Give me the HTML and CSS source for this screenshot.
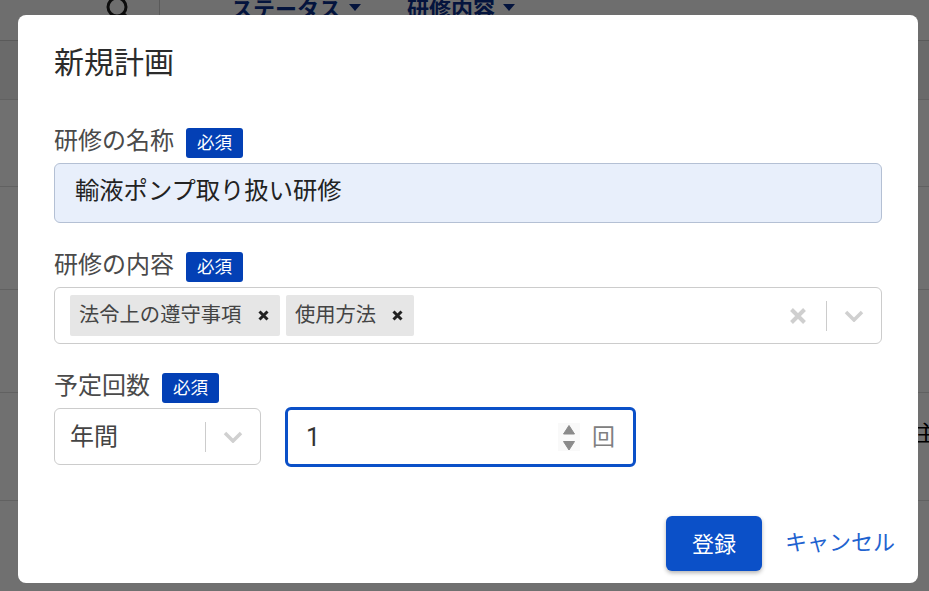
FILE: index.html
```html
<!DOCTYPE html>
<html lang="ja">
<head>
<meta charset="utf-8">
<title>新規計画</title>
<link rel="stylesheet" href="styles.css">
</head>
<body>
<div class="page">
  <header class="page-head">
    <svg class="search" width="26" height="26" viewBox="0 0 26 26"><circle cx="12" cy="11" r="9" fill="none" stroke="#1c1c1c" stroke-width="3"/><path d="M18 17l6 6" stroke="#1c1c1c" stroke-width="3"/></svg>
    <div class="head-rule"></div>
    <div class="filter filter-first">ステータス<span class="caret"></span></div>
    <div class="filter">研修内容<span class="caret"></span></div>
  </header>
  <div class="band"></div>
  <div class="row row-a"></div>
  <div class="row row-b"></div>
  <div class="row row-c"></div>
  <div class="row row-d"><span class="cut">主</span></div>
</div>
<div class="overlay">
  <section class="dialog">
    <h1 class="title">新規計画</h1>
    <div class="label-row first"><span class="label">研修の名称</span><span class="req">必須</span></div>
    <div class="name-input">輸液ポンプ取り扱い研修</div>
    <div class="label-row second"><span class="label">研修の内容</span><span class="req">必須</span></div>
    <div class="multi">
      <div class="tags">
        <span class="tag"><span class="tag-text">法令上の遵守事項</span><svg class="tag-x" width="13" height="13" viewBox="0 0 13 13"><path d="M2.500 2.500l8 8M10.500 2.500l-8 8" stroke="#222" stroke-width="3"/></svg></span>
        <span class="tag tag-short"><span class="tag-text">使用方法</span><svg class="tag-x" width="13" height="13" viewBox="0 0 13 13"><path d="M2.500 2.500l8 8M10.500 2.500l-8 8" stroke="#222" stroke-width="3"/></svg></span>
      </div>
      <svg class="clear" width="18" height="18" viewBox="0 0 18 18"><path d="M2.500 2.500l13 13M15.500 2.500l-13 13" stroke="#cfcfcf" stroke-width="4"/></svg>
      <span class="sep"></span>
      <svg class="chev" width="20" height="12" viewBox="0 0 20 12"><path d="M2 2l8 8 8-8" fill="none" stroke="#d0d0d0" stroke-width="3.500"/></svg>
    </div>
    <div class="label-row third"><span class="label">予定回数</span><span class="req">必須</span></div>
    <div class="count-row">
      <div class="period">
        <span class="period-text">年間</span>
        <span class="sep"></span>
        <svg class="chev" width="20" height="12" viewBox="0 0 20 12"><path d="M2 2l8 8 8-8" fill="none" stroke="#d0d0d0" stroke-width="3.500"/></svg>
      </div>
      <div class="count">
        <span class="count-value">1</span>
        <span class="spin"><svg width="22" height="28" viewBox="0 0 22 28"><rect width="22" height="28" fill="#f9f9f9"/><path d="M11 2.500l5.500 8.500H5.500zM11 27l5.500-8.500H5.500z" fill="#8a8a8a" stroke="#8a8a8a" stroke-linejoin="round"/></svg></span>
        <span class="unit">回</span>
      </div>
    </div>
    <footer class="actions">
      <button class="primary">登録</button>
      <a class="cancel">キャンセル</a>
    </footer>
  </section>
</div>
</body>
</html>
```
FILE: styles.css
```css
* { box-sizing: border-box; }
html, body { margin: 0; height: 100%; }
body {
  width: 929px;
  height: 591px;
  overflow: hidden;
  position: relative;
  background: #fff;
  font-family: "Noto Sans CJK JP", "Noto Sans", sans-serif;
  color: #333;
}
.page { height: 591px; overflow: hidden; }
.page-head {
  height: 41px;
  display: flex;
  align-items: flex-start;
  padding-left: 105px;
  background: #fafafa;
  border-bottom: 1px solid #ccc;
}
.search { margin-top: -4px; }
.head-rule { width: 1px; height: 40px; background: #ccc; margin-left: 28px; }
.filter {
  margin-top: -9px;
  margin-left: 46px;
  font-size: 22px;
  font-weight: 700;
  line-height: 32px;
  color: #0a2f8c;
  display: flex;
  align-items: center;
  white-space: nowrap;
}
.filter-first { margin-left: 71px; }
.caret {
  margin-left: 8px;
  border: 6px solid transparent;
  border-top: 7px solid #0a2f8c;
  border-bottom: 0;
}
.band { height: 59px; background: #f1f1f1; border-bottom: 1px solid #ddd; }
.row { border-bottom: 1px solid #ddd; background: #fff; }
.row-a { height: 87px; }
.row-b { height: 103px; }
.row-c { height: 103px; }
.row-d { height: 108px; padding-left: 915px; font-size: 22px; line-height: 76px; color: #000; white-space: nowrap; }
.overlay {
  position: absolute;
  inset: 0;
  background: rgba(0, 0, 0, 0.56);
  padding: 15px 11px 8px 18px;
}
.dialog {
  height: 568px;
  background: #fff;
  border-radius: 8px;
  padding: 24px 36px 0;
  display: flex;
  flex-direction: column;
}
.title {
  margin: 0;
  font-size: 30px;
  font-weight: 400;
  line-height: 42px;
  color: #2b2b2b;
}
.label-row { display: flex; align-items: center; height: 32px; }
.label-row.first { margin-top: 46px; }
.label-row.second { margin-top: 28px; }
.label-row.third { margin-top: 28px; }
.label { font-size: 24px; line-height: 28px; padding-bottom: 8px; color: #4a4a4a; }
.req {
  margin-left: 12px;
  width: 57px;
  height: 30px;
  background: #0340b5;
  border-radius: 3px;
  color: #fff;
  font-size: 17.500px;
  line-height: 28px;
  text-align: center;
}
.name-input {
  margin-top: 4px;
  height: 60px;
  border: 1px solid #b4c0d4;
  border-radius: 6px;
  background: #e8effb;
  padding-left: 20px;
  font-size: 24.300px;
  line-height: 50px;
  color: #222;
}
.multi {
  margin-top: 4px;
  height: 57px;
  border: 1px solid #ccc;
  border-radius: 6px;
  display: flex;
  align-items: center;
  padding: 0 17px 0 15px;
}
.tags { display: flex; gap: 6px; flex: 1; margin-top: -1px; }
.tag {
  height: 41px;
  width: 210px;
  padding-left: 9px;
  background: #e6e6e6;
  border-radius: 2px;
  font-size: 20.300px;
  color: #444;
  display: flex;
  align-items: center;
  justify-content: space-between;
  padding-right: 10px;
}
.tag-text { padding-bottom: 4px; }
.tag-short { width: 128px; }
.clear { margin-right: 19px; }
.sep { width: 1px; height: 30px; background: #ccc; }
.chev { margin-left: 17px; }
.count-row { display: flex; gap: 24px; margin-top: 4px; }
.period {
  width: 207px;
  height: 57px;
  border: 1px solid #ccc;
  border-radius: 6px;
  display: flex;
  align-items: center;
  padding: 0 17px 0 15px;
}
.period-text { flex: 1; font-size: 24px; color: #444; padding-bottom: 5px; }
.count {
  width: 351px;
  height: 60px;
  margin-top: -1px;
  border: 3px solid #0b50c8;
  border-radius: 6px;
  display: flex;
  align-items: center;
  padding: 0 18px 0 18px;
}
.count-value { flex: 1; font-size: 25px; color: #333; font-family: "Roboto", sans-serif; }
.spin { display: flex; margin-right: 12px; }
.unit { font-size: 23px; color: #808080; padding-bottom: 4px; }
.actions {
  margin-top: auto;
  margin-bottom: 12px;
  display: flex;
  align-items: center;
  justify-content: flex-end;
  gap: 23px;
  margin-right: -12px;
}
.primary {
  width: 96px;
  height: 55px;
  padding: 0 0 4px;
  border: 0;
  border-radius: 6px;
  background: #0b50c8;
  color: #fff;
  font: 400 22px "Noto Sans CJK JP", sans-serif;
  box-shadow: 0 2px 4px rgba(0, 0, 0, 0.3);
}
.cancel { font-size: 22px; color: #1f63d0; padding-bottom: 7px; margin-right: -1px; }
```
